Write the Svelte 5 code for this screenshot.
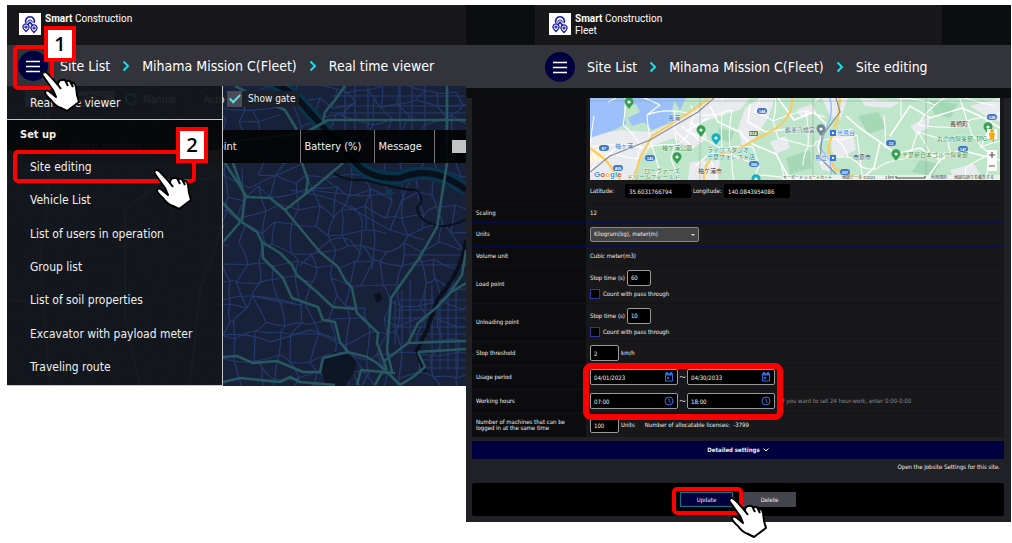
<script lang="ts">
  const menuItems = [
    "Site editing",
    "Vehicle List",
    "List of users in operation",
    "Group list",
    "List of soil properties",
    "Excavator with payload meter",
    "Traveling route",
  ];

  const loadRows = [
    { id: "load", label: "Load point", seconds: "60" },
    { id: "unload", label: "Unloading point", seconds: "10" },
  ];

  let units = $state("Kilogram(kg), meter(m)");

  // Street mesh: a jittered grid of bent lines with some of its edges left out
  function streetMesh(w: number, h: number, step: number, seed: number, keep: number): string {
    let s = seed;
    const rand = () => {
      s = (s * 16807) % 2147483647;
      return s / 2147483647;
    };
    const cols = Math.ceil(w / step) + 1;
    const rows = Math.ceil(h / step) + 1;
    const pts: number[][][] = [];
    for (let r = 0; r < rows; r++) {
      pts.push([]);
      for (let c = 0; c < cols; c++) {
        pts[r].push([
          Math.round((c + (rand() - 0.5) * 0.85) * step),
          Math.round((r + (rand() - 0.5) * 0.85) * step),
        ]);
      }
    }
    const bend = () => (rand() - 0.5) * step * 0.3;
    const edge = (a: number[], b: number[]) =>
      `M${a[0]} ${a[1]}Q${Math.round((a[0] + b[0]) / 2 + bend())} ${Math.round((a[1] + b[1]) / 2 + bend())} ${b[0]} ${b[1]}`;
    let d = "";
    for (let r = 0; r < rows; r++) {
      for (let c = 0; c < cols; c++) {
        if (c + 1 < cols && rand() < keep) d += edge(pts[r][c], pts[r][c + 1]);
        if (r + 1 < rows && rand() < keep) d += edge(pts[r][c], pts[r + 1][c]);
      }
    }
    return d;
  }

  const nightStreets = streetMesh(459, 300, 18, 71, 0.84);
  const dayStreets = streetMesh(410, 82, 21, 19, 0.55);

  const pins = [
    { x: 39, y: 4, color: "#34a052" },
    { x: 111, y: 32, color: "#34a052" },
    { x: 126, y: 40, color: "#12b0c4" },
    { x: 87, y: 59, color: "#34a052" },
    { x: 231, y: 31, color: "#6f8794" },
    { x: 306, y: 56, color: "#34a052" },
    { x: 398, y: 29, color: "#34a052" },
    { x: 166, y: 81, color: "#12b0c4" },
  ];

  const shields = [
    { x: 14, y: 50, text: "87" },
    { x: 60, y: 60, text: "143" },
    { x: 28, y: 70, text: "409" },
    { x: 172, y: 13, text: "144" },
    { x: 164, y: 66, text: "300" },
    { x: 301, y: 45, text: "13" },
    { x: 402, y: 19, text: "128" },
    { x: 373, y: 51, text: "147" },
    { x: 255, y: 74, text: "297" },
  ];

  const places = [
    { x: 78, y: 22, text: "長浦", kind: "rail" },
    { x: 25, y: 50, text: "袖ヶ浦", kind: "rail" },
    { x: 72, y: 52, text: "袖ケ浦公園", kind: "park" },
    { x: 117, y: 54, text: "ライフスタジオ", kind: "shop" },
    { x: 117, y: 61, text: "千葉フォレスト店", kind: "shop" },
    { x: 54, y: 75, text: "ローヴァーズ", kind: "park" },
    { x: 37, y: 81, text: "ドリームフィールド", kind: "park" },
    { x: 108, y: 75, text: "袖ケ浦市", kind: "city" },
    { x: 195, y: 34, text: "鶴峯八幡宮", kind: "shrine" },
    { x: 247, y: 37, text: "光風台", kind: "rail" },
    { x: 225, y: 62, text: "馬立", kind: "rail" },
    { x: 263, y: 61, text: "市原市", kind: "city" },
    { x: 360, y: 28, text: "長柄町", kind: "city" },
    { x: 347, y: 43, text: "丸の内倶楽部【PGM】", kind: "park" },
    { x: 312, y: 59, text: "千葉新日本ゴルフ倶楽部", kind: "park" },
  ];
</script>

{#snippet hand()}
  <svg class="hand" viewBox="0 0 40 42" aria-hidden="true">
    <path
      d="M2 5Q0 1 4 1Q6 1 17 14Q17 9 21 9Q24 8 25 11Q28 8 30 12Q34 11 35 16L36 24L38 31L26 40L20 37Q14 35 10 29Q4 24 4 21Q5 18 9 21L15 26L12 19Z"
    />
    <path d="M17 14L20 18M25 11L27 15M30 12L32 16" />
  </svg>
{/snippet}

{#snippet brand()}
  <div class="brand">
    <svg class="logo" viewBox="0 0 22 22" aria-hidden="true">
      <rect width="22" height="22" fill="#fff" />
      <g fill="none" stroke="#1c1ca8" stroke-width="1.6">
        <path d="M7 10A4.4 4.4 0 1 1 15 10" />
        <path d="M8.6 9.4A2.4 2.4 0 1 1 13.4 9.4" stroke-width="1" />
        <path d="M11 9L8 13M11 9L14 13" />
      </g>
      <g fill="#fff" stroke="#1c1ca8" stroke-width="1.2">
        <path d="M7 18.500L4.600 15.800A3 3 0 1 1 9.400 15.800Z" />
        <path d="M15 19.500L12.600 16.800A3 3 0 1 1 17.400 16.800Z" />
        <circle cx="7" cy="14" r="1" />
        <circle cx="15" cy="15" r="1" />
      </g>
    </svg>
    <div class="brand-name"><b>Smart</b> Construction<br />Fleet</div>
  </div>
{/snippet}

{#snippet chevron()}
  <svg class="chevron" viewBox="0 0 8 12" aria-hidden="true"><path d="M1.500 1.500L6 6L1.500 10.500" /></svg>
{/snippet}

{#snippet crumbs(page: string)}
  <a href="#sites">Site List</a>
  {@render chevron()}
  <a href="#fleet">Mihama Mission C(Fleet)</a>
  {@render chevron()}
  <span>{page}</span>
{/snippet}

{#snippet burger()}
  <button class="burger" aria-label="Menu">
    <svg viewBox="0 0 30 30" aria-hidden="true"><path d="M8 10.500H22M8 15.500H22M8 20.500H22" /></svg>
  </button>
{/snippet}

{#snippet calendar()}
  <svg class="icon" viewBox="0 0 10 10" aria-hidden="true">
    <path d="M1.500 2H8.500V9H1.500Z" />
    <path d="M1 2.500H9M3 0V2M7 0V2" stroke-width="2" />
    <rect class="solid" x="3" y="5" width="2" height="2" />
  </svg>
{/snippet}

{#snippet clock()}
  <svg class="icon" viewBox="0 0 10 10" aria-hidden="true">
    <circle cx="5" cy="5" r="4" />
    <path d="M5 2.500V5L7 6.500" />
  </svg>
{/snippet}

<main class="guide">
  <section class="panel viewer">
    <header>
      {@render brand()}
      <nav class="crumb-bar">
        <div class="burger-wrap">
          {@render burger()}
          <div class="mark mark-burger"></div>
          <div class="badge badge-one">1</div>
          {@render hand()}
        </div>
        {@render crumbs("Real time viewer")}
      </nav>
    </header>

    <div class="stage">
      <svg class="night-map" viewBox="7 86 459 300" preserveAspectRatio="xMidYMid slice" aria-hidden="true">
        <rect x="7" y="86" width="459" height="300" fill="#17213a" />
        <g fill="none" stroke="#253a6c" stroke-width="1.2">
          <g transform="translate(7 86)"><path d={nightStreets} /></g>
          <path
            d="M223 175Q240 184 250 188Q264 180 275 176L300 165M290 190Q330 196 345 205L390 230L425 240M223 300Q250 290 300 305M310 190L360 196L395 193M350 205Q364 215 362 225Q362 245 358 260L340 268M223 335Q250 332 270 342L310 330L340 340M390 230L410 180M370 190L375 240L372 270M300 265L330 240Q342 236 350 240L362 255"
          />
          <path
            d="M345 86V130M355 86V130M368 86V130M400 86V130M412 86V130M425 86V130M330 96H466M335 106H466M330 113H466M395 300V345M402 290V345M410 280V340M425 290V340M432 285V370M440 300V370M448 290V370M456 290V370M400 300H466M395 310H466M392 318H466M392 327H466M410 334H466M420 360H466M420 368H466M405 255H466M410 265H466M345 360L360 386M352 355L375 386"
          />
        </g>
        <g fill="none" stroke="#07344a" stroke-width="13">
          <path d="M250 76Q285 82 305 107L353 160Q368 180 400 178Q433 164 466 190" />
        </g>
        <g fill="none" stroke="#0a0f1c">
          <path d="M250 76Q285 82 305 107L353 160Q368 180 400 178Q433 164 466 190" stroke-width="6" />
          <path d="M417 190Q425 200 417 208Q418 222 440 226Q455 226 466 219" stroke-width="2" />
          <path d="M466 240Q462 272 437 300L427 330L417 350L425 372" stroke-width="4" />
          <path d="M333 172Q345 182 365 180Q400 190 417 190" stroke-width="2" />
        </g>
        <path d="M324 358L335 352L350 355L357 362L353 375L345 386H326L322 372Z" fill="#0e1527" />
        <path d="M374 295L380 292L382 300L377 303Z" fill="#0b1120" />
        <path d="M386 190L393 189L391 196L387 196Z" fill="#0a3a50" />
        <g fill="none" stroke="#28585f" stroke-width="2.600" stroke-linejoin="round">
          <path d="M220 143L305 133L328 120H466M323 122L325 112L335 100L345 86M447 86V163L437 227L420 257L391 298L387 350L392 372" />
          <path d="M223 160L247 197L270 198L285 210L320 252L338 267L345 280L352 288L357 313L378 333L377 343L387 370" />
          <path d="M233 163L245 197L242 220L223 242M223 203L240 221L257 232L262 242L280 253L292 265L297 275L317 292L333 307L355 309" />
          <path d="M262 242L263 258L283 278L292 298L318 307L323 320L335 322L340 342L348 352L367 357L377 363L387 372L400 385" />
          <path d="M223 357L237 356L253 363L277 361L303 372L320 372L323 358L348 352M285 210L317 185L343 163M302 163L308 180L306 192" />
          <path d="M466 283L450 293L437 307L418 323L408 343L383 362M408 343L466 341M418 352L466 349M418 352L425 367L413 377L400 385M466 250L462 275L450 293" />
          <path d="M223 382L240 378L280 382L290 377L300 382L335 385M357 385L361 370L395 373M375 385L382 372" />
          <path d="M48 86V200L40 260L50 386M125 210L150 190L223 175M125 210V320L140 386M223 225L200 290L190 386M7 300L60 305L130 290" />
          <path d="M235 86L262 100L285 110L297 130" />
        </g>
      </svg>

      <div class="toolbar">
        <div class="under-menu">
          <button class="map-type">地図　航空写真</button>
          <label><input type="radio" name="mode" checked />Manual</label>
          <label><input type="radio" name="mode" />Auto</label>
        </div>
        <label class="gate"><input type="checkbox" checked /><span>Show gate</span></label>
      </div>

      <table class="machines">
        <thead>
          <tr>
            <th class="batch"><button>Batch sending</button></th>
            <th class="point">Point</th>
            <th class="battery">Battery (%)</th>
            <th class="message">Message</th>
            <th class="swatch"><div></div></th>
          </tr>
        </thead>
      </table>

      <nav class="menu">
        <a class="menu-item menu-top" href="#viewer">Real time viewer</a>
        <h2>Set up</h2>
        {#each menuItems as item, i (item)}
          <a class="menu-item" class:current={i === 0} href="#setup-{i}">
            {item}
            {#if i === 0}
              <span class="mark mark-item"></span>
              <span class="badge badge-two">2</span>
              {@render hand()}
            {/if}
          </a>
        {/each}
      </nav>
    </div>
  </section>

  <section class="panel editor">
    <header>
      <div class="brand-strip">{@render brand()}</div>
      <nav class="crumb-bar">
        {@render burger()}
        {@render crumbs("Site editing")}
      </nav>
    </header>

    <form class="body" onsubmit={(e) => e.preventDefault()}>
      <table class="settings">
        <tbody>
          <tr class="map-row">
            <th scope="row"></th>
            <td>
              <svg class="day-map" viewBox="0 0 410 82" preserveAspectRatio="xMidYMid slice" role="img" aria-label="Map">
                <rect width="410" height="82" fill="#bfe5ca" />
                <g fill="#e9ebee">
                  <path d="M0 38L30 32L62 34L90 20L120 0H160L150 12L130 18L108 26L118 40L100 52L84 40L62 48L50 62L40 82H0Z" />
                  <path d="M155 10L170 0H185L178 20L165 40L152 48L148 30Z" />
                  <path d="M100 64L130 62L128 82H98ZM232 0H258L250 22L240 18ZM240 34L262 30L266 52L250 60L242 54ZM320 28L340 18L338 30L326 36ZM270 0L310 4L300 10L275 8ZM380 8L410 0V24L396 18ZM228 60L240 58L244 74L232 72Z" />
                  <path d="M180 44L196 38L200 50L186 56ZM206 12L222 6L226 14L212 20ZM360 72L384 66L390 76L364 80Z" />
                </g>
                <g fill="#a5d8b5">
                  <path d="M196 60L220 52L222 70L200 76ZM268 18L288 14L296 30L278 36ZM340 2L368 6L360 20L344 16ZM330 62L350 66L342 78L322 74ZM128 30L144 34L140 44L130 42Z" />
                </g>
                <path d="M0 0H96L90 12L84 2L82 14L86 22L72 28L62 32L54 24L42 28L38 20L50 14L46 6L34 8L36 26L24 32L0 40Z" fill="#9cc0f9" />
                <path d="M0 58L10 46L20 52L10 62L0 66Z" fill="#fdf3d6" />
                <g fill="none" stroke="#fff">
                  <path d={dayStreets} stroke-width="1.100" />
                  <path d="M120 8L128 24L150 34L158 44L186 56L200 82M160 6L158 24L176 34L204 30M188 0L204 22L224 14L236 26L228 48L232 66M256 18L270 30L290 44L306 56L330 50L350 62L370 52L410 62M300 38L312 20L320 8L340 20L372 10L390 18L410 30M270 82L284 70L290 44M336 82L350 62M96 34L118 20M92 28L112 44M86 34L104 50M100 24L116 36" stroke-width="1.600" />
                </g>
                <path d="M240 0Q244 16 236 30L230 50L240 62L242 82" fill="none" stroke="#9cc0f9" stroke-width="1.500" />
                <g fill="none" stroke="#fbcb63" stroke-width="2.200">
                  <path d="M44 82L50 60L62 38L100 14L120 0M0 50L16 62L30 82M202 0Q204 24 172 38L154 48L140 54Q112 58 114 82M250 0L248 20L238 50L244 70L258 76L272 82" />
                </g>
                <path d="M0 74L20 58L60 42L108 14L124 0M246 0L250 14L232 38L230 60L246 76" fill="none" stroke="#8a8d90" stroke-width="1.200" />
                <path d="M110 0V82M223 0V82M336 0V82M0 3H410" stroke="#8aa695" stroke-width="1" opacity=".5" />

                {#each pins as pin}
                  <g transform="translate({pin.x} {pin.y})">
                    <path d="M0 7L-3 3A4.500 4.500 0 1 1 3 3Z" fill={pin.color} />
                    <circle r="1.600" fill="#fff" />
                  </g>
                {/each}
                {#each shields as shield}
                  <rect x={shield.x - 5} y={shield.y - 3} width="10" height="6" rx="3" fill="#3d78c9" />
                  <text class="shield" x={shield.x} y={shield.y + 2}>{shield.text}</text>
                {/each}
                <rect x="159" y="33" width="9" height="5" rx="1" fill="#5d8c37" />
                <text class="shield" x="163" y="37">E14</text>
                {#each places as place}
                  <text class="place {place.kind}" x={place.x} y={place.y}>{place.text}</text>
                {/each}
                <g fill="#fff" stroke="#3478e6" stroke-width="2">
                  <rect x="241" y="33" width="4" height="4" />
                  <rect x="241" y="58" width="4" height="4" />
                </g>

                <rect x="192" y="77" width="218" height="5" fill="#f2f5f3" opacity=".8" />
                <text class="credit" x="193" y="81">キーボード ショートカット</text>
                <text class="credit" x="252" y="81">地図データ ©2023</text>
                <text class="credit" x="295" y="81">2 km</text>
                <path d="M306 78V80H335V78" fill="none" stroke="#444" />
                <text class="credit" x="341" y="81">利用規約</text>
                <text class="credit" x="364" y="81">地図の誤りを報告する</text>
                <text class="google" x="4" y="79">
                  <tspan fill="#4285f4">G</tspan><tspan fill="#ea4335">o</tspan><tspan fill="#fbbc05">o</tspan><tspan fill="#4285f4">g</tspan><tspan fill="#34a853">l</tspan><tspan fill="#ea4335">e</tspan>
                </text>
                <g fill="#fff">
                  <rect x="397" y="31" width="10" height="10" />
                  <rect x="397" y="52" width="10" height="21" />
                </g>
                <circle cx="402" cy="33" r="2" fill="#f6a609" />
                <path d="M399 35H405L404 41H400Z" fill="#f6a609" />
                <path d="M399 57H405M402 54V60M399 68H405" stroke="#555" stroke-width="1.200" />
              </svg>
              <div class="line coords">
                <label for="lat">Latitude:</label>
                <input id="lat" value="35.6031766794" />
                <label for="lng">Longitude:</label>
                <input id="lng" value="140.0843954086" />
              </div>
            </td>
          </tr>
          <tr>
            <th scope="row">Scaling</th>
            <td>12</td>
          </tr>
          <tr class="control-row">
            <th scope="row"><label for="units">Units</label></th>
            <td>
              <div class="select-wrap">
                <select id="units" bind:value={units}>
                  <option>Kilogram(kg), meter(m)</option>
                </select>
              </div>
            </td>
          </tr>
          <tr>
            <th scope="row">Volume unit</th>
            <td>Cubic meter(m3)</td>
          </tr>
          {#each loadRows as row (row.id)}
            <tr class="point-row">
              <th scope="row">{row.label}</th>
              <td>
                <div class="line">
                  <label for="{row.id}-stop">Stop time (s)</label>
                  <input id="{row.id}-stop" class="box seconds" value={row.seconds} />
                </div>
                <label class="pass"><input type="checkbox" />Count with pass through</label>
              </td>
            </tr>
          {/each}
          <tr class="control-row">
            <th scope="row"><label for="threshold">Stop threshold</label></th>
            <td>
              <div class="line"><input id="threshold" class="box count" value="2" /> km/h</div>
            </td>
          </tr>
          <tr class="control-row">
            <th scope="row">Usage period</th>
            <td class="marked">
              <div class="line range">
                <div class="box field"><input aria-label="Usage period from" value="04/01/2023" />{@render calendar()}</div>
                <span>～</span>
                <div class="box field"><input aria-label="Usage period to" value="04/30/2033" />{@render calendar()}</div>
              </div>
              <div class="mark mark-range"></div>
            </td>
          </tr>
          <tr class="control-row">
            <th scope="row">Working hours</th>
            <td>
              <div class="line range">
                <div class="box field"><input aria-label="Working hours from" value="07:00" />{@render clock()}</div>
                <span>～</span>
                <div class="box field"><input aria-label="Working hours to" value="18:00" />{@render clock()}</div>
                <span class="hint">If you want to set 24 hour-work, enter 0:00-0:00</span>
              </div>
            </td>
          </tr>
          <tr class="control-row">
            <th scope="row"><label for="machines">Number of machines that can be<br />logged in at the same time</label></th>
            <td>
              <div class="line">
                <input id="machines" class="box count" value="100" /> Units
                <span class="licenses">Number of allocatable licenses: &nbsp;-3799</span>
              </div>
            </td>
          </tr>
        </tbody>
      </table>

      <button class="detailed" type="button">
        Detailed settings
        <svg viewBox="0 0 6 4" aria-hidden="true"><path d="M.5 .5L3 3L5.500 .5" /></svg>
      </button>
      <a class="jobsite" href="#jobsite">Open the Jobsite Settings for this site.</a>

      <div class="actions">
        <div class="update-wrap">
          <button class="update">Update</button>
          <div class="mark mark-update"></div>
          {@render hand()}
        </div>
        <button class="delete" type="button">Delete</button>
      </div>
    </form>
  </section>
</main>

<style>
  :global(body) {
    margin: 0;
    background: #fff;
  }

  .guide {
    display: grid;
    grid-template-columns: 459fr 545fr;
    align-items: start;
    padding: 5px 1px 21px 7px;
    font-family: "DejaVu Sans Condensed", "DejaVu Sans", "Noto Sans CJK JP", sans-serif;
    color: #f0f0f0;
  }

  * {
    box-sizing: border-box;
  }

  button,
  input,
  select {
    font: inherit;
    color: inherit;
    margin: 0;
    padding: 0;
    border: 0;
    background: none;
    min-width: 0;
  }

  a {
    color: inherit;
    text-decoration: none;
  }

  .panel {
    min-width: 0;
    background: #18181a;
  }

  /* header */
  .brand {
    display: flex;
    gap: 4px;
    height: 40px;
    padding: 8px 12px 0;
  }

  .logo {
    width: 22px;
    height: 22px;
  }

  .brand-name {
    font-family: Roboto, sans-serif;
    font-size: 10px;
    line-height: 12px;
    color: #fff;
    white-space: nowrap;
  }

  .crumb-bar {
    display: flex;
    align-items: center;
    gap: 12px;
    height: 41px;
    padding-left: 11px;
    background: #33333b;
    color: #fff;
    font-size: 14px;
    white-space: nowrap;
  }

  .burger {
    display: block;
    flex: none;
    width: 30px;
    height: 30px;
    border-radius: 50%;
    background: #000040;
  }

  .burger svg {
    display: block;
    width: 30px;
    height: 30px;
  }

  .burger path {
    stroke: #fff;
    stroke-width: 1.5;
  }

  .chevron {
    width: 8px;
    height: 12px;
  }

  .chevron path {
    fill: none;
    stroke: #10e0e8;
    stroke-width: 2;
  }

  .viewer header {
    position: relative;
    z-index: 2;
  }

  .editor header {
    background: #0c0d0e;
    padding-bottom: 10px;
  }

  .brand-strip {
    margin: 0 69px;
    background: #18181a;
  }

  .brand-strip .brand {
    padding-left: 14px;
  }

  .editor .crumb-bar {
    height: 43px;
    padding-left: 79px;
  }

  /* step marks */
  .mark,
  .badge,
  .hand {
    position: absolute;
  }

  .mark {
    border: 4px solid #f00;
    border-radius: 5px;
    pointer-events: none;
  }

  .badge {
    display: grid;
    place-items: center;
    width: 32px;
    height: 36px;
    border: 4px solid #f00;
    background: #fff;
    color: #000;
    font-family: "Open Sans", sans-serif;
    font-size: 20px;
    font-weight: 600;
    line-height: 20px;
  }

  .hand {
    width: 40px;
    height: 42px;
    overflow: visible;
  }

  .hand path {
    fill: #fff;
    stroke: #000;
    stroke-width: 2;
    stroke-linejoin: round;
  }

  .burger-wrap,
  .update-wrap,
  .marked,
  .current {
    position: relative;
  }

  .mark-burger {
    inset: -6px -6px -9px -5px;
  }

  .badge-one {
    left: 26px;
    top: -25px;
  }

  .burger-wrap .hand {
    left: 23px;
    top: 20px;
  }

  .mark-item {
    inset: 0 26px 0 6px;
  }

  .badge-two {
    right: 14px;
    top: -23px;
  }

  .menu-item .hand {
    right: 29px;
    top: 19px;
  }

  .mark-range {
    left: -3px;
    top: -3px;
    width: 200px;
    height: 57px;
    border-width: 6px;
    border-radius: 8px;
  }

  .mark-update {
    inset: -5px -10px -8px -8px;
  }

  .update-wrap .hand {
    right: -35px;
    bottom: -32px;
  }

  /* real time viewer */
  .stage {
    position: relative;
    min-height: 300px;
    overflow: hidden;
  }

  .night-map {
    position: absolute;
    inset: 0;
    width: 100%;
    height: 100%;
  }

  .toolbar {
    position: relative;
    display: flex;
    align-items: center;
    height: 44px;
    padding-bottom: 18px;
    font-size: 10px;
  }

  .under-menu {
    display: flex;
    align-items: center;
    gap: 10px;
    width: 220px;
    padding-left: 18px;
    overflow: hidden;
  }

  .under-menu label {
    display: flex;
    align-items: center;
    gap: 6px;
  }

  .under-menu input {
    appearance: none;
    width: 12px;
    height: 12px;
    border: 2px solid #23234e;
    border-radius: 50%;
  }

  .under-menu input:checked {
    border-color: #4fd0c0;
  }

  .map-type {
    flex: none;
    width: 90px;
    height: 16px;
    background: #999;
    color: #000;
    white-space: nowrap;
  }

  .gate {
    display: flex;
    gap: 6px;
    padding-right: 4px;
    background: #1b2029;
    line-height: 16px;
  }

  .gate input {
    appearance: none;
    width: 15px;
    height: 16px;
    background: #4a4a58;
    clip-path: inset(0);
  }

  .gate input:checked::after {
    content: "";
    display: block;
    width: 4px;
    height: 9px;
    margin: 1px 0 0 5px;
    border: solid #5fe0da;
    border-width: 0 2px 2px 0;
    transform: rotate(45deg);
  }

  .machines {
    position: relative;
    width: 100%;
    height: 33px;
    table-layout: fixed;
    border-collapse: collapse;
    background: rgb(0 0 0 / 85%);
    font-size: 11px;
  }

  .machines th {
    padding: 0 0 0 4px;
    border-right: 1px solid #777;
    font-weight: 400;
    text-align: left;
    white-space: nowrap;
  }

  .machines .batch {
    width: 193px;
    border: 0;
    text-align: center;
  }

  .batch button {
    padding: 4px 12px;
    background: #113;
  }

  .point {
    width: 100px;
  }

  .machines .point {
    padding-left: 12px;
  }

  .battery {
    width: 74px;
  }

  .message {
    width: 60px;
  }

  .machines .swatch {
    padding-left: 17px;
    border: 0;
  }

  .swatch div {
    height: 13px;
    background: #c4c4c4;
  }

  .menu {
    position: absolute;
    inset: 0 auto 0 0;
    display: flex;
    flex-direction: column;
    width: 216px;
    padding-bottom: 1px;
    border-right: 1px solid #c8c8c8;
    border-bottom: 1px solid #c8c8c8;
    background: rgb(20 22 26 / 92%);
  }

  .menu-item {
    display: flex;
    flex: 1;
    align-items: center;
    padding-left: 23px;
    font-size: 12px;
  }

  .menu-top {
    flex: none;
    height: 34px;
    border-bottom: 1px solid #c8c8c8;
  }

  .menu h2 {
    margin: 0;
    padding-left: 13px;
    background: rgb(0 0 0 / 60%);
    font-size: 11px;
    line-height: 30px;
  }

  /* site editing */
  .body {
    display: flex;
    flex-direction: column;
    padding: 0 7px 6px 6px;
    background: #202126;
    font-size: 6px;
    line-height: 6px;
  }

  .settings {
    width: 100%;
    table-layout: fixed;
    border-collapse: collapse;
  }

  .settings tr {
    height: 19px;
    border-bottom: 1px solid #0b0d4a;
  }

  .settings tr:last-child {
    border: 0;
  }

  .settings .control-row {
    height: 24px;
  }

  .settings .point-row {
    height: 38px;
  }

  .settings .map-row {
    height: 105px;
  }

  .settings th,
  .settings td {
    padding: 0 4px;
    text-align: left;
    font-weight: 400;
  }

  .settings th {
    width: 114px;
    background: #0c0c0e;
  }

  .settings td {
    background: #18181b;
  }

  .settings .map-row td {
    vertical-align: top;
  }

  .day-map {
    display: block;
    width: 100%;
    height: 82px;
  }

  .place {
    font: 6px "Noto Sans CJK JP", sans-serif;
    paint-order: stroke;
    stroke: rgb(255 255 255 / 60%);
    stroke-width: 1px;
  }

  .rail {
    fill: #3d78c9;
  }

  .park {
    fill: #3b9456;
  }

  .shop {
    fill: #128fa0;
  }

  .city {
    fill: #444;
  }

  .shrine {
    fill: #66757f;
  }

  .shield {
    fill: #fff;
    font: 700 4px "Liberation Sans", sans-serif;
    text-anchor: middle;
  }

  .credit {
    fill: #333;
    font: 4px "Noto Sans CJK JP", sans-serif;
  }

  .google {
    font: 700 8px "Liberation Sans", sans-serif;
    paint-order: stroke;
    stroke: #fff;
    stroke-width: 1px;
  }

  .line {
    display: flex;
    align-items: center;
    gap: 2px;
    white-space: nowrap;
  }

  .coords {
    padding-top: 4px;
  }

  .coords label {
    width: 33px;
  }

  .coords label + input + label {
    width: 29px;
  }

  .coords input {
    width: 66px;
    height: 14px;
    padding-left: 4px;
    border-radius: 2px;
    background: #000;
  }

  .select-wrap {
    position: relative;
    width: 109px;
  }

  .select-wrap::after {
    content: "";
    position: absolute;
    right: 4px;
    top: 7px;
    border: 2px solid transparent;
    border-top-color: #ddd;
  }

  select {
    appearance: none;
    display: block;
    width: 100%;
    height: 15px;
    padding-left: 3px;
    border: 1px solid #8a8a8a;
    border-radius: 2px;
    background: #444;
  }

  .box {
    height: 16px;
    padding-left: 3px;
    border: 1px solid #9a9a9a;
    border-radius: 2px;
    background: #000;
  }

  .seconds {
    width: 24px;
  }

  .count {
    width: 29px;
  }

  .pass {
    display: flex;
    align-items: center;
    gap: 3px;
    margin-top: 3px;
  }

  .pass input {
    appearance: none;
    width: 10px;
    height: 10px;
    border: 1px solid #3434a0;
    background: #000;
  }

  .field {
    display: flex;
    align-items: center;
    width: 88px;
    padding-right: 3px;
  }

  .field input {
    flex: 1;
  }

  .range {
    gap: 1px;
  }

  .range span {
    width: 7px;
    text-align: center;
  }

  .range .hint {
    width: auto;
    padding-left: 5px;
    color: #8a8a8a;
  }

  .icon {
    width: 10px;
    height: 10px;
    fill: none;
    stroke: #2f6fe0;
  }

  .icon .solid {
    fill: #2f6fe0;
    stroke: none;
  }

  .licenses {
    padding-left: 8px;
  }

  .detailed {
    display: flex;
    align-items: center;
    justify-content: center;
    gap: 3px;
    height: 18px;
    margin-top: 4px;
    border-radius: 1px;
    background: #000040;
    font-weight: 700;
  }

  .detailed svg {
    width: 6px;
    height: 4px;
    fill: none;
    stroke: #fff;
  }

  .jobsite {
    align-self: flex-end;
    padding: 5px 4px 13px;
  }

  .actions {
    display: flex;
    align-items: center;
    justify-content: center;
    gap: 10px;
    height: 33px;
    border-radius: 2px;
    background: #000;
  }

  .actions button {
    display: block;
    width: 53px;
    height: 15px;
  }

  .update {
    background: #000040;
  }

  .actions .update {
    border: 1px solid #0d7286;
  }

  .delete {
    background: #44444e;
  }
</style>
